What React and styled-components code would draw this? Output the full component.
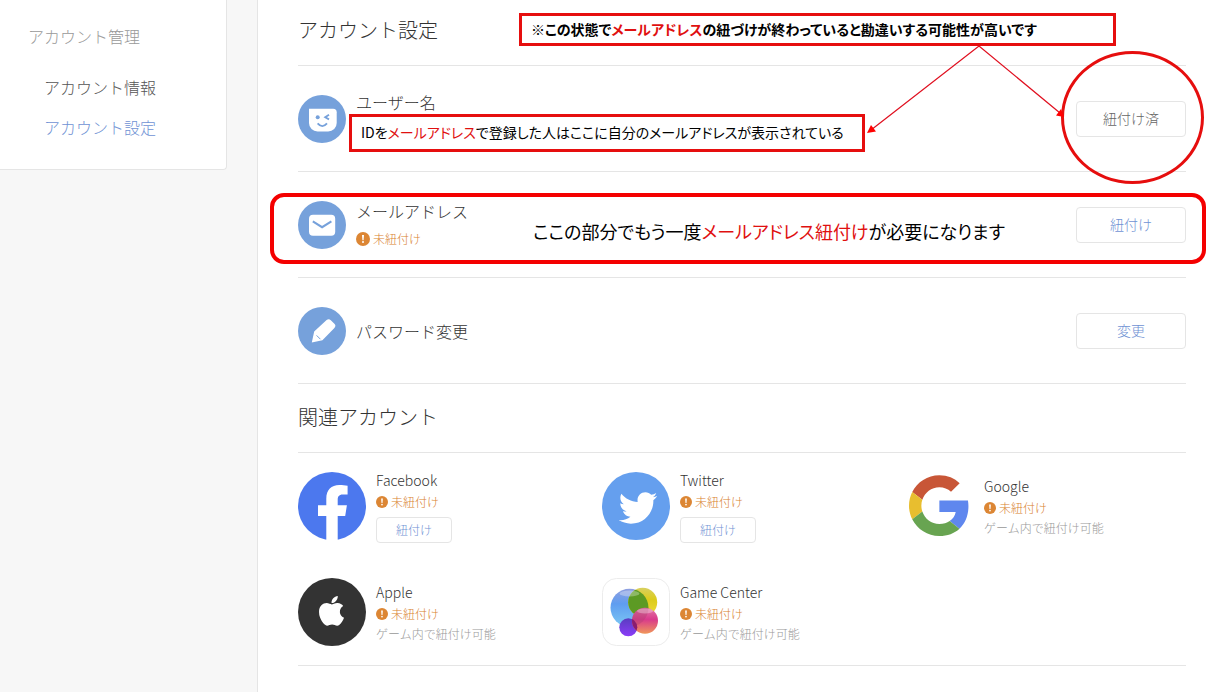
import React from 'react';
import styled, { createGlobalStyle } from 'styled-components';
import { FaApple, FaTwitter } from 'react-icons/fa';

const GlobalStyle = createGlobalStyle`
  * {
    box-sizing: border-box;
  }

  body {
    margin: 0;
    background: #f7f7f7;
    color: #444;
    font-family: 'Noto Sans CJK JP', sans-serif;
    font-weight: 300;
  }

  h1, h2, p, ul {
    margin: 0;
    padding: 0;
    font-weight: 300;
  }
`;

const Page = styled.div`
  display: flex;
  align-items: flex-start;
  min-height: 100vh;
`;

const Sidebar = styled.nav`
  flex: 0 0 227px;
  margin-right: 30px;
  padding: 16px 28px 22px;
  background: #fff;
  border: 1px solid #e5e5e5;
  border-width: 0 1px 1px 0;
  border-radius: 0 0 4px 0;
  font-size: 16px;
  line-height: 40px;
`;

const SidebarTitle = styled.p`
  margin-bottom: 11px;
  color: #999;
`;

const SidebarLink = styled.a`
  display: block;
  padding-left: 16px;
  color: ${(props) => (props.$active ? '#6f92d4' : '#555')};
  text-decoration: none;
`;

const Main = styled.main`
  position: relative;
  flex: 1;
  min-width: 0;
  min-height: 100vh;
  padding: 0 28px 0 40px;
  background: #fff;
  border-left: 1px solid #e5e5e5;
`;

const SectionTitle = styled.h2`
  padding: ${(props) => (props.$first ? '14px 0 19px' : '17px 0 19px')};
  border-bottom: 1px solid #e5e5e5;
  color: #333;
  font-size: 20px;
  line-height: 32px;
`;

const Row = styled.section`
  display: flex;
  align-items: center;
  gap: 10px;
  height: 106px;
  border-bottom: 1px solid #e5e5e5;
`;

const RowText = styled.div`
  flex: 1;
`;

const RowLabel = styled.p`
  color: #333;
  font-size: 16px;
  line-height: 28px;
`;

const UserValue = styled.div`
  height: 34px;
`;

const Status = styled.p`
  display: flex;
  align-items: center;
  gap: 3px;
  color: #d9822f;
  font-size: 12px;
  line-height: ${(props) => (props.$small ? '20px' : '28px')};
`;

const Button = styled.button`
  width: ${(props) => (props.$small ? '76px' : '110px')};
  height: ${(props) => (props.$small ? '26px' : '36px')};
  padding: 0 0 2px;
  background: #fff;
  border: 1px solid #e5e5e5;
  border-radius: 4px;
  color: ${(props) => (props.$done ? '#666' : '#6f92d4')};
  font-family: inherit;
  font-size: ${(props) => (props.$small ? '12px' : '14px')};
  font-weight: 300;
  cursor: pointer;
`;

const AccountGrid = styled.ul`
  display: grid;
  grid-template-columns: repeat(3, 1fr);
  gap: 34px 24px;
  padding: 15px 0 19px;
  border-bottom: 1px solid #e5e5e5;
  list-style: none;
`;

const Account = styled.li`
  display: flex;
  align-items: center;
  gap: 10px;
`;

const AccountText = styled.div`
  padding-bottom: 1px;

  button {
    display: block;
    margin-top: 5px;
  }
`;

const AccountName = styled.p`
  color: #333;
  font-size: 14px;
  line-height: 24px;
`;

const Hint = styled.p`
  color: #999;
  font-size: 12px;
  line-height: 20px;
`;

// 赤枠の注釈
const Note = styled.p`
  position: absolute;
  display: flex;
  align-items: center;
  padding: 0 0 2px 9px;
  background: #fff;
  border: 3px solid #e60e0e;
  color: #000;
  font-size: 14px;
  font-feature-settings: 'palt';
  font-weight: 400;
  white-space: pre;
`;

const TopNote = styled(Note)`
  top: 13px;
  left: 261px;
  width: 597px;
  height: 33px;
  font-weight: 700;
`;

const UserNote = styled(Note)`
  top: 114px;
  left: 91px;
  width: 516px;
  height: 38px;
`;

const MailNote = styled(Note)`
  top: 193px;
  left: 12px;
  width: 936px;
  height: 71px;
  padding: 4px 0 0 259px;
  background: none;
  border: 4px solid #f40000;
  border-radius: 14px;
  font-size: 18px;
  pointer-events: none;
`;

const Red = styled.span`
  color: #e01010;
`;

const CircleMark = styled.span`
  position: absolute;
  top: 51px;
  left: 803px;
  width: 143px;
  height: 133px;
  border: 3px solid #e60e0e;
  border-radius: 50%;
  pointer-events: none;
`;

const Arrows = styled.svg`
  position: absolute;
  top: 46px;
  left: 608px;
  pointer-events: none;
`;

function UserIcon() {
  return (
    <svg width="48" height="48" viewBox="0 0 48 48" aria-hidden="true">
      <circle cx="24" cy="24" r="24" fill="#76a1db" />
      <path d="M11 13.7h24.2a3.5 3.5 0 0 1 3.5 3.5V28a8.5 8.5 0 0 1-8.5 8.5H19.5A8.5 8.5 0 0 1 11 28z" fill="#fff" />
      <circle cx="19.7" cy="22.3" r="2" fill="#76a1db" />
      <path d="M31 19.8l-3.8 2.4 3.8 2.2M19.6 28.4q4.7 5.4 9.4 0" fill="none" stroke="#76a1db" strokeWidth="1.8" />
    </svg>
  );
}

function MailIcon() {
  return (
    <svg width="48" height="48" viewBox="0 0 48 48" aria-hidden="true">
      <circle cx="24" cy="24" r="24" fill="#76a1db" />
      <rect x="11" y="13.8" width="26.2" height="21" rx="4" fill="#fff" />
      <path d="M14.8 20.3l9.3 5.9 9.3-5.9" fill="none" stroke="#76a1db" strokeWidth="2" />
    </svg>
  );
}

function PencilIcon() {
  return (
    <svg width="48" height="48" viewBox="0 0 48 48" aria-hidden="true">
      <circle cx="24" cy="24" r="24" fill="#76a1db" />
      <path d="M13.8 35.6l2.4-11L28.6 13q2.200-1.800 4.200.2l3.600 3.600q2 2 0 4.200L24.400 33.200z" fill="#fff" />
      <path d="M18.600 28.400l3.800 3.800" stroke="#76a1db" strokeWidth="1" />
    </svg>
  );
}

function FacebookIcon() {
  return (
    <svg width="68" height="68" viewBox="0 0 68 68" aria-hidden="true">
      <circle cx="34" cy="34" r="34" fill="#4c78ee" />
      <path d="M28.3 68V44H20V33.3h8.3v-6.6c0-8.9 5-13.7 13-13.7 3.2 0 5.6 0.2 8.3 0.7v8.9h-4.8c-4 0-5.1 2.3-5.1 5.200v5.500h9.200L47.200 44h-7.500v24z" fill="#fff" />
    </svg>
  );
}

function TwitterIcon() {
  return (
    <svg width="68" height="68" viewBox="0 0 68 68" aria-hidden="true">
      <circle cx="34" cy="34" r="34" fill="#659fee" />
      <FaTwitter x="16.7" y="16.7" size={38.6} color="#fff" />
    </svg>
  );
}

function GoogleIcon() {
  return (
    <svg width="68" height="68" viewBox="0 0 68 68" aria-hidden="true">
      <g transform="translate(3 3.3) scale(1.265)">
        <path fill="#c85637" d="M24 9.5c3.54 0 6.71 1.22 9.21 3.6l6.85-6.85C35.9 2.38 30.47 0 24 0 14.62 0 6.51 5.38 2.56 13.22l7.98 6.19C12.43 13.72 17.74 9.5 24 9.5z" />
        <path fill="#5f87ee" d="M46.98 24.55c0-1.57-.15-3.09-.38-4.55H24v9.02h12.94c-.58 2.96-2.26 5.48-4.78 7.18l7.73 6c4.51-4.18 7.09-10.36 7.09-17.65z" />
        <path fill="#e8be2f" d="M10.53 28.59c-.48-1.45-.76-2.99-.76-4.59s.27-3.14.76-4.59l-7.98-6.19C.92 16.46 0 20.12 0 24c0 3.88.92 7.54 2.56 10.78l7.97-6.19z" />
        <path fill="#68a451" d="M24 48c6.48 0 11.93-2.13 15.89-5.81l-7.73-6c-2.15 1.45-4.92 2.3-8.16 2.3-6.26 0-11.57-4.22-13.47-9.91l-7.98 6.19C6.51 42.62 14.62 48 24 48z" />
      </g>
    </svg>
  );
}

function AppleIcon() {
  return (
    <svg width="68" height="68" viewBox="0 0 68 68" aria-hidden="true">
      <circle cx="34" cy="34" r="34" fill="#333" />
      <FaApple x="16.5" y="15.8" size={34} color="#fff" />
    </svg>
  );
}

function GameCenterIcon() {
  return (
    <svg width="68" height="68" viewBox="0 0 68 68" aria-hidden="true">
      <defs>
        <linearGradient id="gcBlue" x1="0" y1="0" x2="0" y2="1">
          <stop offset="0" stopColor="#8f9fe0" />
          <stop offset="0.4" stopColor="#5f9df0" />
          <stop offset="1" stopColor="#7cc8f4" />
        </linearGradient>
        <linearGradient id="gcYellow" x1="0" y1="0" x2="0" y2="1">
          <stop offset="0" stopColor="#d8d060" />
          <stop offset="0.4" stopColor="#dccb1c" />
          <stop offset="1" stopColor="#f0dc3c" />
        </linearGradient>
        <linearGradient id="gcPink" x1="0" y1="0" x2="0" y2="1">
          <stop offset="0" stopColor="#e27aa8" />
          <stop offset="0.45" stopColor="#d93a8c" />
          <stop offset="1" stopColor="#f0975a" />
        </linearGradient>
        <linearGradient id="gcPurple" x1="0" y1="0" x2="0" y2="1">
          <stop offset="0" stopColor="#5a3cc0" />
          <stop offset="1" stopColor="#8a3cf8" />
        </linearGradient>
        <clipPath id="gcBlueClip">
          <circle cx="27.5" cy="29.7" r="19" />
        </clipPath>
        <clipPath id="gcPinkClip">
          <circle cx="43" cy="42.7" r="13" />
        </clipPath>
      </defs>
      <rect x="0.5" y="0.5" width="67" height="67" rx="14" fill="#fff" stroke="#ececec" />
      <circle cx="27.5" cy="29.7" r="19" fill="url(#gcBlue)" />
      <circle cx="40.7" cy="24.3" r="14.5" fill="url(#gcYellow)" />
      <circle cx="40.7" cy="24.3" r="14.5" fill="#5c9a24" clipPath="url(#gcBlueClip)" />
      <circle cx="26.3" cy="49.3" r="9" fill="url(#gcPurple)" />
      <circle cx="43" cy="42.7" r="13" fill="url(#gcPink)" />
      <circle cx="27.5" cy="29.7" r="19" fill="#b04070" opacity="0.4" clipPath="url(#gcPinkClip)" />
      <circle cx="26.3" cy="49.3" r="9" fill="#8a1c70" clipPath="url(#gcPinkClip)" />
      <ellipse cx="27.5" cy="15.5" rx="10" ry="3" fill="#fff" opacity="0.3" />
      <ellipse cx="43" cy="33" rx="8" ry="2.5" fill="#fff" opacity="0.3" />
    </svg>
  );
}

function AlertIcon({ size }) {
  return (
    <svg width={size} height={size} viewBox="0 0 14 14" aria-hidden="true">
      <circle cx="7" cy="7" r="7" fill="#dc8634" />
      <path d="M6 3h2l-.4 5.2H6.4z" fill="#fff" />
      <circle cx="7" cy="10" r="1" fill="#fff" />
    </svg>
  );
}

const accounts = [
  { name: 'Facebook', Icon: FacebookIcon, linkable: true },
  { name: 'Twitter', Icon: TwitterIcon, linkable: true },
  { name: 'Google', Icon: GoogleIcon },
  { name: 'Apple', Icon: AppleIcon },
  { name: 'Game Center', Icon: GameCenterIcon },
];

function App() {
  return (
    <>
      <GlobalStyle />
      <Page>
        <Sidebar>
          <SidebarTitle>アカウント管理</SidebarTitle>
          <SidebarLink href="#info">アカウント情報</SidebarLink>
          <SidebarLink href="#settings" $active>アカウント設定</SidebarLink>
        </Sidebar>

        <Main>
          <SectionTitle $first>アカウント設定</SectionTitle>
          <Row>
            <UserIcon />
            <RowText>
              <RowLabel>ユーザー名</RowLabel>
              <UserValue />
            </RowText>
            <Button type="button" $done>紐付け済</Button>
          </Row>
          <Row>
            <MailIcon />
            <RowText>
              <RowLabel>メールアドレス</RowLabel>
              <Status><AlertIcon size={14} />未紐付け</Status>
            </RowText>
            <Button type="button">紐付け</Button>
          </Row>
          <Row>
            <PencilIcon />
            <RowText>
              <RowLabel>パスワード変更</RowLabel>
            </RowText>
            <Button type="button">変更</Button>
          </Row>

          <SectionTitle>関連アカウント</SectionTitle>
          <AccountGrid>
            {accounts.map(({ name, Icon, linkable }) => (
              <Account key={name}>
                <Icon />
                <AccountText>
                  <AccountName>{name}</AccountName>
                  <Status $small><AlertIcon size={12} />未紐付け</Status>
                  {linkable ? (
                    <Button type="button" $small>紐付け</Button>
                  ) : (
                    <Hint>ゲーム内で紐付け可能</Hint>
                  )}
                </AccountText>
              </Account>
            ))}
          </AccountGrid>

          <TopNote>
            ※この状態で<Red>メールアドレス</Red>の紐づけが終わっていると勘違いする可能性が高いです
          </TopNote>
          <UserNote>
            IDを<Red>メールアドレス</Red>で登録した人はここに自分のメールアドレスが表示されている
          </UserNote>
          <MailNote>
            ここの部分でもう一度<Red>メールアドレス紐付け</Red>が必要になります
          </MailNote>
          <CircleMark />
          <Arrows width="200" height="90" viewBox="0 0 200 90" aria-hidden="true">
            <path d="M113 0L5 84M113 0l81 67" fill="none" stroke="#e01020" strokeWidth="1.2" />
            <path d="M1 87l4-8 5 6.5zM198 71l-8-1.5 5-6.5z" fill="#f00" />
          </Arrows>
        </Main>
      </Page>
    </>
  );
}

export default App;
